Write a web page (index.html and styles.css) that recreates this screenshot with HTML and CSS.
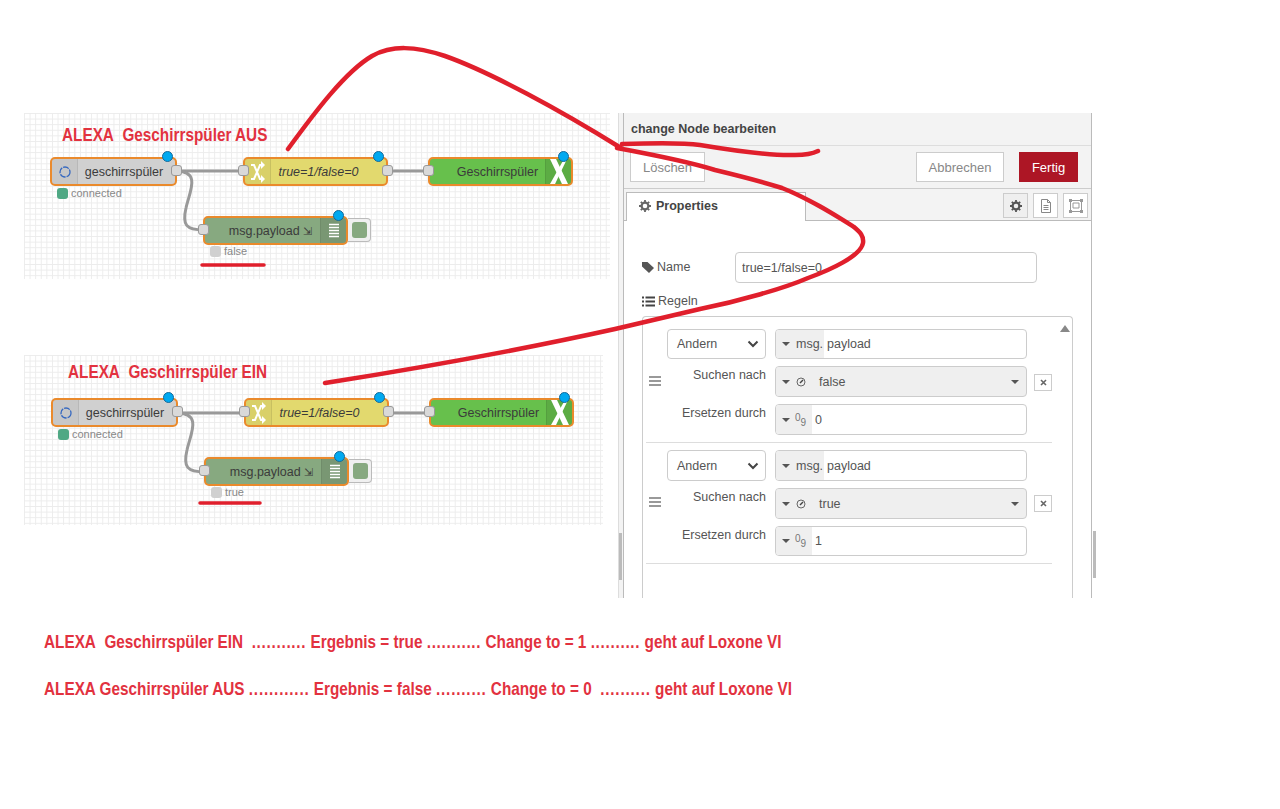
FILE: index.html
```html
<!DOCTYPE html>
<html lang="de">
<head>
<meta charset="utf-8">
<title>ALEXA Geschirrspüler</title>
<link rel="stylesheet" href="styles.css">
</head>
<body>
<main class="board">
  <section class="flow flow-a">
    <h2 class="flow-title title-a">ALEXA&nbsp; Geschirrspüler AUS</h2>
    <svg class="wires" width="586" height="166" viewBox="0 0 586 166"><path d="M152 58H225M364 58H410"/><path d="M152 58C178 58 165 80 162 95C158 112 162 117 180 117"/></svg>
    <div class="node n-alexa n1"><span class="ico ico-left"><svg width="14" height="14" viewBox="0 0 14 14"><circle cx="7" cy="7" r="5" fill="none" stroke="#3568c0" stroke-width="1.3" stroke-dasharray="6 1"/></svg></span><span class="lbl">geschirrspüler</span><i class="port pr"></i><i class="dot"></i></div>
    <div class="stat st1"><i class="sq green"></i>connected</div>
    <div class="node n-change n2"><span class="ico ico-left"><svg width="16" height="22" viewBox="0 0 16 22"><path d="M1 4H4L10 18H12M1 18H4L10 4H12" fill="none" stroke="#fff" stroke-width="2"/><path d="M11 0L15 4L11 8ZM11 14L15 18L11 22Z" fill="#fff"/></svg></span><em class="lbl">true=1/false=0</em><i class="port pl"></i><i class="port pr"></i><i class="dot"></i></div>
    <div class="node n-green n3"><span class="lbl">Geschirrspüler</span><span class="ico ico-right"><svg width="24" height="25" viewBox="0 0 24 25"><path d="M3 0H9L21 25H15Z" fill="#fff"/><path d="M17 0H20L8 25H3Z" fill="#fff"/></svg></span><i class="port pl"></i><i class="dot"></i></div>
    <div class="node n-debug n4"><span class="lbl">msg.payload <small>⇲</small></span><span class="ico ico-right"><svg width="12" height="16" viewBox="0 0 12 16"><path d="M1 1.5H11M1 4.5H11M1 7.5H11M1 10.5H11M1 13.5H11" stroke="#fff" stroke-width="1.4"/></svg></span><i class="port pl"></i><i class="dot"></i></div>
    <div class="dbg d4"><i></i></div>
    <div class="stat st4"><i class="sq grey"></i>false</div>
  </section>

  <section class="flow flow-b">
    <h2 class="flow-title title-b">ALEXA&nbsp; Geschirrspüler EIN</h2>
    <svg class="wires" width="579" height="170" viewBox="0 0 579 170"><path d="M153 58H226M365 58H411"/><path d="M153 58C179 58 166 80 163 95C159 112 163 117 181 117"/></svg>
    <div class="node n-alexa n1 shift"><span class="ico ico-left"><svg width="14" height="14" viewBox="0 0 14 14"><circle cx="7" cy="7" r="5" fill="none" stroke="#3568c0" stroke-width="1.3" stroke-dasharray="6 1"/></svg></span><span class="lbl">geschirrspüler</span><i class="port pr"></i><i class="dot"></i></div>
    <div class="stat st1 shift"><i class="sq green"></i>connected</div>
    <div class="node n-change n2 shift"><span class="ico ico-left"><svg width="16" height="22" viewBox="0 0 16 22"><path d="M1 4H4L10 18H12M1 18H4L10 4H12" fill="none" stroke="#fff" stroke-width="2"/><path d="M11 0L15 4L11 8ZM11 14L15 18L11 22Z" fill="#fff"/></svg></span><em class="lbl">true=1/false=0</em><i class="port pl"></i><i class="port pr"></i><i class="dot"></i></div>
    <div class="node n-green n3 shift"><span class="lbl">Geschirrspüler</span><span class="ico ico-right"><svg width="24" height="25" viewBox="0 0 24 25"><path d="M3 0H9L21 25H15Z" fill="#fff"/><path d="M17 0H20L8 25H3Z" fill="#fff"/></svg></span><i class="port pl"></i><i class="dot"></i></div>
    <div class="node n-debug n4 shift"><span class="lbl">msg.payload <small>⇲</small></span><span class="ico ico-right"><svg width="12" height="16" viewBox="0 0 12 16"><path d="M1 1.5H11M1 4.5H11M1 7.5H11M1 10.5H11M1 13.5H11" stroke="#fff" stroke-width="1.4"/></svg></span><i class="port pl"></i><i class="dot"></i></div>
    <div class="dbg d4 shift"><i></i></div>
    <div class="stat st4 shift"><i class="sq grey"></i>true</div>
  </section>

  <aside class="panel">
    <div class="gutter"><i class="bar"></i></div>
    <div class="tray">
      <header class="tray-head">change Node bearbeiten</header>
      <div class="tray-bar">
        <button class="btn del">Löschen</button>
        <span class="grow"></span>
        <button class="btn cancel">Abbrechen</button>
        <button class="btn done">Fertig</button>
      </div>
      <div class="tabs">
        <div class="tab"><svg class="gear" width="12" height="12" viewBox="0 0 12 12"><circle cx="6" cy="6" r="3.4" fill="none" stroke="#666" stroke-width="2.2"/><path d="M6 0V12M0 6H12M1.8 1.8L10.2 10.2M10.2 1.8L1.8 10.2" stroke="#666" stroke-width="1.8" stroke-dasharray="2 8"/></svg>Properties</div>
        <span class="grow"></span>
        <span class="tab-ico on"><svg class="gear" width="12" height="12" viewBox="0 0 12 12"><circle cx="6" cy="6" r="3.4" fill="none" stroke="#555" stroke-width="2.2"/><path d="M6 0V12M0 6H12M1.8 1.8L10.2 10.2M10.2 1.8L1.8 10.2" stroke="#555" stroke-width="1.8" stroke-dasharray="2 8"/></svg></span>
        <span class="tab-ico"><svg width="12" height="14" viewBox="0 0 12 14"><path d="M1.5 .5H7.5L10.5 3.5V13.5H1.5ZM7.5 .5V3.5H10.5M3.5 6.5H8.5M3.5 8.5H8.5M3.5 10.5H8.5" fill="none" stroke="#888"/></svg></span>
        <span class="tab-ico"><svg width="16" height="14" viewBox="0 0 16 14"><path d="M2.5 1.5H13.5V12.5H2.5ZM5 4H11V9H5Z" fill="none" stroke="#999"/><path d="M1 0H4V3H1ZM12 0H15V3H12ZM1 11H4V14H1ZM12 11H15V14H12Z" fill="#999"/></svg></span>
      </div>
      <div class="form">
        <label class="name-row"><span class="name-lbl"><svg width="12" height="12" viewBox="0 0 12 12"><path d="M0 1H5.5L12 7L7 12L0 5.5Z" fill="#555"/></svg>Name</span><input class="inp name-inp" value="true=1/false=0"></label>
        <div class="rules-lbl"><svg width="13" height="11" viewBox="0 0 13 11"><path d="M0 1.5H2M3.5 1.5H13M0 5.5H2M3.5 5.5H13M0 9.5H2M3.5 9.5H13" stroke="#444" stroke-width="2"/></svg>Regeln</div>
        <div class="rules">
          <div class="rule">
            <span class="handle"><i></i><i></i><i></i></span>
            <div class="rule-grid">
              <div class="sel">Andern<svg width="12" height="8" viewBox="0 0 12 8"><path d="M1.5 1.5L6 6L10.5 1.5" fill="none" stroke="#444" stroke-width="2"/></svg></div>
              <div class="typed"><span class="pre wide"><b class="car"></b>msg.</span><span class="val">payload</span></div>
              <div class="cap">Suchen nach</div>
              <div class="typed grey"><span class="pre"><b class="car"></b><svg class="clock" width="10" height="10" viewBox="0 0 10 10"><circle cx="5" cy="5" r="4" fill="none" stroke="#666"/><path d="M4 6L7 3" stroke="#444" stroke-width="1.4"/></svg></span><span class="val bool">false</span><b class="car end"></b></div>
              <div class="cap">Ersetzen durch</div>
              <div class="typed"><span class="pre num"><b class="car"></b><span class="nine">0<sub>9</sub></span></span><span class="val">0</span></div>
            </div>
            <button class="x"><svg width="7" height="7" viewBox="0 0 7 7"><path d="M1 1L6 6M6 1L1 6" stroke="#666" stroke-width="1.6"/></svg></button>
          </div>
          <div class="rule">
            <span class="handle"><i></i><i></i><i></i></span>
            <div class="rule-grid">
              <div class="sel">Andern<svg width="12" height="8" viewBox="0 0 12 8"><path d="M1.5 1.5L6 6L10.5 1.5" fill="none" stroke="#444" stroke-width="2"/></svg></div>
              <div class="typed"><span class="pre wide"><b class="car"></b>msg.</span><span class="val">payload</span></div>
              <div class="cap">Suchen nach</div>
              <div class="typed grey"><span class="pre"><b class="car"></b><svg class="clock" width="10" height="10" viewBox="0 0 10 10"><circle cx="5" cy="5" r="4" fill="none" stroke="#666"/><path d="M4 6L7 3" stroke="#444" stroke-width="1.4"/></svg></span><span class="val bool">true</span><b class="car end"></b></div>
              <div class="cap">Ersetzen durch</div>
              <div class="typed"><span class="pre num"><b class="car"></b><span class="nine">0<sub>9</sub></span></span><span class="val">1</span></div>
            </div>
            <button class="x"><svg width="7" height="7" viewBox="0 0 7 7"><path d="M1 1L6 6M6 1L1 6" stroke="#666" stroke-width="1.6"/></svg></button>
          </div>
          <i class="scroll-up"></i>
        </div>
      </div>
    </div>
    <div class="gutter right"><i class="bar"></i></div>
  </aside>

  <div class="notes">
    <p><span>ALEXA&nbsp; Geschirrspüler EIN&nbsp; <b class="dots">...........</b> Ergebnis = true <b class="dots">...........</b> Change to = 1 <b class="dots">..........</b> geht auf Loxone VI</span></p>
    <p><span>ALEXA Geschirrspüler AUS <b class="dots">............</b> Ergebnis = false <b class="dots">..........</b> Change to = 0&nbsp; <b class="dots">..........</b> geht auf Loxone VI</span></p>
  </div>

  <svg class="ink" width="1280" height="809" viewBox="0 0 1280 809">
    <path d="M288 149C315 112 345 72 372 56C392 45 415 46 445 56C490 72 560 110 621 148"/>
    <path d="M617 148C660 156 690 162 715 170C740 176 760 181 782 188C810 199 835 215 854 227C860 232 864 236 863 243C861 256 830 270 808 278C785 288 740 301 700 309C670 316 640 323 615 329C520 350 420 368 325 383"/>
    <path d="M622 144C650 143 680 142 700 145C730 150 770 156 795 155C805 155 814 153 818 151"/>
    <path class="thick" d="M202 265H264M200 503H260"/>
  </svg>
</main>
</body>
</html>
```
FILE: styles.css
```css
* { box-sizing: border-box; }
html, body { margin: 0; padding: 0; background: #fff; }
body { font-family: "Liberation Sans", Arial, sans-serif; font-size: 12.5px; color: #555; overflow: hidden; }
.board { position: relative; width: 1280px; height: 809px; }

/* free-canvas flow pictures */
.flow {
  position: absolute;
  background-color: #fff;
  background-image: linear-gradient(#ececec 1px, transparent 1px), linear-gradient(90deg, #ececec 1px, transparent 1px);
  background-size: 5.6px 5.6px;
}
.flow-a { left: 24px; top: 113px; width: 586px; height: 166px; }
.flow-b { left: 24px; top: 355px; width: 579px; height: 170px; }
.flow-title {
  position: absolute; margin: 0; font-size: 19px; line-height: 20px; font-weight: bold; color: #e2323f;
  white-space: nowrap; transform: scaleX(.806); transform-origin: left center;
}
.title-a { left: 38px; top: 12px; }
.title-b { left: 44px; top: 7px; }
.wires { position: absolute; left: 0; top: 0; }
.wires path { fill: none; stroke: #999; stroke-width: 3; }

.node {
  position: absolute; display: flex; align-items: center; height: 29px;
  border: 2px solid #ea8a2c; border-radius: 5px; color: #3b3b3b; font-size: 12.5px;
}
.n1 { left: 26px; top: 44px; width: 127px; }
.n2 { left: 219px; top: 44px; width: 145px; }
.n3 { left: 404px; top: 44px; width: 145px; }
.n4 { left: 179px; top: 103px; width: 145px; }
.shift { margin-left: 1px; margin-top: -1px; }
.n-alexa { background: #d0d0d0; }
.n-change { background: #e2d96e; }
.n-green { background: #67c04c; }
.n-debug { background: #87a980; }
.ico { flex: none; width: 26px; height: 100%; display: flex; align-items: center; justify-content: center; }
.ico-left { background: rgba(0,0,0,.04); border-right: 1px solid rgba(0,0,0,.08); border-radius: 3px 0 0 3px; }
.ico-right { background: rgba(0,0,0,.1); border-left: 1px solid rgba(0,0,0,.08); border-radius: 0 3px 3px 0; }
.lbl { flex: 1; text-align: center; white-space: nowrap; font-style: normal; }
.n1 .lbl { padding-right: 5px; }
.n2 .lbl { padding-right: 20px; font-style: italic; }
.n3 .lbl { padding-left: 20px; }
.n4 .lbl { padding-left: 16px; }
.lbl small { font-size: 11px; }
.port {
  position: absolute; top: 6px; width: 11px; height: 11px; background: #d9d9d9;
  border: 1px solid #999; border-radius: 3px;
}
.pr { right: -7px; }
.pl { left: -7px; }
.dot {
  position: absolute; right: 2px; top: -8px; width: 11px; height: 11px; border-radius: 50%;
  background: #00a9f0; border: 1px solid #156a9a;
}
.stat { position: absolute; display: flex; align-items: center; gap: 3px; font-size: 11px; color: #888; white-space: nowrap; }
.st1 { left: 33px; top: 74px; }
.st4 { left: 186px; top: 132px; }
.sq { width: 11px; height: 11px; border-radius: 3px; }
.green { background: #4fa884; }
.grey { background: #d0d0d0; }
.dbg {
  position: absolute; display: flex; align-items: center; justify-content: center; width: 23px; height: 24px;
  background: #f0f0f0; border: 1px solid #bbb; border-left: 0; border-radius: 0 4px 4px 0;
}
.d4 { left: 324px; top: 105px; }
.dbg i { width: 15px; height: 16px; background: #87a980; border-radius: 3px; }

/* editor tray */
.panel { position: absolute; left: 618px; top: 113px; width: 480px; height: 485px; display: flex; overflow: hidden; }
.gutter { flex: none; width: 6px; display: flex; align-items: flex-end; padding-bottom: 18px; border-left: 1px solid #ddd; border-right: 1px solid #bbb; background: #f3f3f3; }
.gutter .bar { display: block; width: 3px; height: 47px; background: #bbb; }
.gutter.right { border-left: 1px solid #bbb; border-right: 0; background: #fff; width: 7px; padding-left: 1px; padding-bottom: 20px; }
.tray { flex: 1; min-width: 0; display: flex; flex-direction: column; }
.tray-head { flex: none; height: 33px; padding: 0 0 0 7px; display: flex; align-items: center; background: #f3f3f3; border-bottom: 1px solid #ddd; font-size: 12.5px; font-weight: bold; color: #444; }
.tray-bar { flex: none; height: 43px; display: flex; align-items: center; padding: 0 13px 0 6px; background: #f3f3f3; border-bottom: 1px solid #ccc; }
.grow { flex: 1; }
.btn { height: 30px; font: inherit; font-size: 13px; background: #fff; color: #888; border: 1px solid #ccc; padding: 0; }
.del { width: 75px; }
.cancel { width: 88px; margin-right: 15px; }
.done { width: 59px; background: #ad1625; border-color: #ad1625; color: #fff; }
.tabs { flex: none; height: 32px; display: flex; align-items: flex-end; padding: 0 3px 0 2px; background: #f3f3f3; border-bottom: 1px solid #bbb; }
.tab { width: 180px; height: 29px; margin-bottom: -1px; display: flex; align-items: center; gap: 5px; padding: 0 0 2px 12px; background: #fff; border: 1px solid #bbb; border-bottom: 0; font-weight: bold; color: #444; }
.tab-ico { width: 25px; height: 25px; margin: 0 0 2px 5px; display: flex; align-items: center; justify-content: center; background: #fff; border: 1px solid #ccc; }
.tab-ico.on { background: #efefef; }
.form { flex: 1; background: #fff; padding: 31px 18px 0 18px; }
.name-row { display: flex; align-items: center; height: 31px; }
.name-lbl { width: 93px; display: flex; align-items: center; gap: 3px; padding-bottom: 2px; }
.inp { font: inherit; color: #555; height: 31px; width: 302px; padding: 0 6px; border: 1px solid #ccc; border-radius: 4px; outline: 0; }
.rules-lbl { margin-top: 10px; height: 16px; display: flex; align-items: center; gap: 3px; }
.rules { position: relative; margin-top: 7px; height: 300px; width: 431px; padding: 12px 0 0 3px; border: 1px solid #ccc; border-bottom: 0; border-radius: 4px 4px 0 0; }
.rule { display: flex; align-items: center; width: 406px; padding-bottom: 7px; margin-bottom: 7px; border-bottom: 1px solid #ddd; }
.handle { flex: none; width: 21px; padding: 0 0 2px 3px; display: flex; flex-direction: column; gap: 2px; }
.handle i { display: block; width: 12px; height: 2px; background: #999; }
.rule-grid { display: grid; grid-template-columns: 99px 252px; column-gap: 9px; row-gap: 7px; }
.sel, .typed { height: 31px; border: 1px solid #ccc; border-radius: 4px; display: flex; align-items: center; background: #fff; overflow: hidden; }
.sel { height: 30px; justify-content: space-between; padding: 0 6px 0 9px; }
.typed:nth-child(2) { height: 30px; }
.rule + .rule .sel, .rule + .rule .typed:nth-child(2) { height: 31px; }
.rule + .rule .typed:last-child { height: 30px; }
.cap { text-align: right; line-height: 16px; padding-top: 1px; }
.pre { flex: none; height: 100%; display: flex; align-items: center; gap: 6px; padding-left: 6px; background: #efefef; }
.wide { width: 48px; }
.num { width: 36px; gap: 5px; }
.nine { font-size: 10px; line-height: 10px; margin-top: -4px; color: #777; }
.nine sub { font-size: 10px; vertical-align: -5px; line-height: 0; }
.car { flex: none; display: block; width: 0; height: 0; border-left: 4px solid transparent; border-right: 4px solid transparent; border-top: 4px solid #555; }
.val { flex: 1; padding-left: 3px; }
.typed.grey { background: #efefef; }
.typed .bool { padding-left: 13px; }
.end { margin-right: 7px; }
.x { flex: none; width: 18px; height: 17px; margin-left: 7px; padding: 0; display: flex; align-items: center; justify-content: center; background: #fff; border: 1px solid #ccc; }
.scroll-up { position: absolute; right: 2px; top: 8px; width: 0; height: 0; border-left: 5px solid transparent; border-right: 5px solid transparent; border-bottom: 7px solid #888; }

/* captions */
.notes { position: absolute; left: 44px; top: 632px; }
.notes p { margin: 0 0 27px; height: 20px; line-height: 20px; }
.notes span { display: inline-block; font-size: 19px; font-weight: bold; color: #e2323f; white-space: nowrap; transform: scaleX(.806); transform-origin: left center; }
.dots { letter-spacing: 1px; }
.notes p:first-child .dots { letter-spacing: .88px; }

/* hand-drawn annotation over the whole picture */
.ink { position: absolute; left: 0; top: 0; pointer-events: none; }
.ink path { fill: none; stroke: #e01f2c; stroke-width: 4.5; stroke-linecap: round; stroke-linejoin: round; }
.ink .thick { stroke-width: 3.5; }
```
